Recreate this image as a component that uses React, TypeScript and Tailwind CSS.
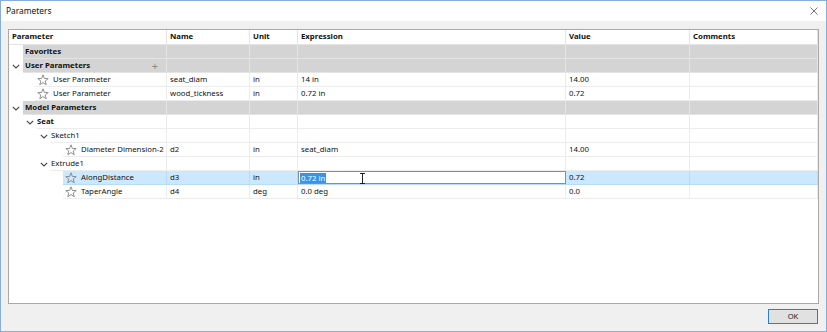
import { ReactNode } from "react"

type Row = {
  kind: "cat" | "group" | "leaf"
  level: number
  label: string
  toggle?: boolean
  plus?: boolean
  bold?: boolean
  name?: string
  unit?: string
  expr?: string
  value?: string
  selected?: boolean
  editing?: boolean
}

const rows: Row[] = [
  { kind: "cat", level: 0, label: "Favorites" },
  { kind: "cat", level: 0, label: "User Parameters", toggle: true, plus: true },
  { kind: "leaf", level: 1, label: "User Parameter", name: "seat_diam", unit: "in", expr: "14 in", value: "14.00" },
  { kind: "leaf", level: 1, label: "User Parameter", name: "wood_tickness", unit: "in", expr: "0.72 in", value: "0.72" },
  { kind: "cat", level: 0, label: "Model Parameters", toggle: true },
  { kind: "group", level: 1, label: "Seat", toggle: true, bold: true },
  { kind: "group", level: 2, label: "Sketch1", toggle: true },
  { kind: "leaf", level: 3, label: "Diameter Dimension-2", name: "d2", unit: "in", expr: "seat_diam", value: "14.00" },
  { kind: "group", level: 2, label: "Extrude1", toggle: true },
  { kind: "leaf", level: 3, label: "AlongDistance", name: "d3", unit: "in", expr: "0.72 in", value: "0.72", selected: true, editing: true },
  { kind: "leaf", level: 3, label: "TaperAngle", name: "d4", unit: "deg", expr: "0.0 deg", value: "0.0" },
]

const cols = "grid grid-cols-[158px_83px_48px_268px_124px_128px]"

function Chevron() {
  return (
    <svg width="8" height="5" viewBox="0 0 8 5" className="text-[#444]">
      <path d="M0.8 0.8 L4 4 L7.2 0.8" fill="none" stroke="currentColor" strokeWidth="1.1" />
    </svg>
  )
}

function StarIcon() {
  return (
    <svg width="12" height="12" viewBox="0 0 12 12" className="shrink-0">
      <polygon
        points="6,0.8 7.35,4.44 11.23,4.6 8.19,7.01 9.23,10.75 6,8.6 2.77,10.75 3.81,7.01 0.77,4.6 4.65,4.44"
        fill="none"
        stroke="#858585"
        strokeWidth="0.9"
        strokeLinejoin="round"
      />
    </svg>
  )
}

function Cell({ children, className = "" }: { children?: ReactNode; className?: string }) {
  return <div className={`flex h-[14px] items-center border-r border-b px-[3px] ${className}`}>{children}</div>
}

function TreeRow({ row }: { row: Row }) {
  if (row.kind === "cat") {
    return (
      <div className={`${cols} font-bold`}>
        <div className="flex h-[14px]">
          <div className="flex w-[14px] items-center justify-center">{row.toggle && <Chevron />}</div>
          <div className="flex flex-1 items-center justify-between border-r border-b border-[#e4e4e4] bg-[#d4d4d4] pl-[2px] pr-[8px]">
            <span>{row.label}</span>
            {row.plus && <span className="text-[11px] font-normal leading-none text-[#8a8a8a]">+</span>}
          </div>
        </div>
        {[0, 1, 2, 3, 4].map((i) => (
          <div key={i} className="h-[14px] border-r border-b border-[#e4e4e4] bg-[#d4d4d4]" />
        ))}
      </div>
    )
  }

  const sel = row.selected
  const bg = sel ? "bg-[#cce8ff] border-[#b8dcf7]" : "border-[#ececec]"

  return (
    <div className={cols}>
      <div className="flex h-[14px]">
        <div style={{ width: row.level * 14 }} className="shrink-0" />
        <div className="flex w-[14px] shrink-0 items-center justify-center">
          {row.kind === "group" && <Chevron />}
        </div>
        {row.kind === "leaf" ? (
          <div className={`-ml-[2px] flex flex-1 items-center gap-[4px] border-r border-b pl-[2px] ${bg}`}>
            <StarIcon />
            <span>{row.label}</span>
          </div>
        ) : (
          <div className={`flex flex-1 items-center border-r border-b border-[#ececec] ${row.bold ? "font-bold" : ""}`}>
            {row.label}
          </div>
        )}
      </div>
      <Cell className={bg}>{row.name}</Cell>
      <Cell className={bg}>{row.unit}</Cell>
      {row.editing ? (
        <div className={`h-[14px] border-b ${bg}`}>
          <div className="relative flex h-full items-center border border-[#8d8d8d] bg-white pl-[1px]">
            <span className="bg-[#3296f0] px-[1px] leading-[10px] text-white">{row.expr}</span>
            <svg width="7" height="11" viewBox="0 0 7 11" className="absolute left-[60px] top-[1px]">
              <path d="M1 0.5 H6 M3.5 0.5 V10.5 M1 10.5 H6" stroke="#222" strokeWidth="1" fill="none" />
            </svg>
          </div>
        </div>
      ) : (
        <Cell className={bg}>{row.expr}</Cell>
      )}
      <Cell className={bg}>{row.value}</Cell>
      <Cell className={bg} />
    </div>
  )
}

export default function App() {
  return (
    <div
      className="flex h-[332px] w-[827px] flex-col border border-[#86aedc] bg-[#f0f0f0] text-[7.8px] text-[#111]"
      style={{ fontFamily: '"Noto Sans", "Open Sans", sans-serif' }}
    >
      <div className="flex h-[20px] shrink-0 items-center justify-between bg-white pl-[5px] pr-[8px]">
        <span className="text-[8.4px] text-[#111]">Parameters</span>
        <svg width="8" height="8" viewBox="0 0 8 8">
          <path d="M0.5 0.5 L7.5 7.5 M7.5 0.5 L0.5 7.5" stroke="#666" strokeWidth="0.9" />
        </svg>
      </div>

      <div className="mt-[8px] ml-[7px] h-[275px] w-[811px] border border-[#a9a9a9] bg-white">
        <div className={`${cols} h-[15px] font-bold`}>
          {["Parameter", "Name", "Unit", "Expression", "Value", "Comments"].map((h) => (
            <div key={h} className="flex items-center border-r border-b border-[#e4e4e4] px-[3px]">
              {h}
            </div>
          ))}
        </div>
        {rows.map((row, i) => (
          <TreeRow key={i} row={row} />
        ))}
      </div>

      <div className="mt-[5px] flex justify-end pr-[8px]">
        <button className="flex h-[15px] w-[50px] items-center justify-center border border-[#2a7fd4] bg-[#e1e1e1] text-[7.6px] text-[#222]">
          OK
        </button>
      </div>
    </div>
  )
}
